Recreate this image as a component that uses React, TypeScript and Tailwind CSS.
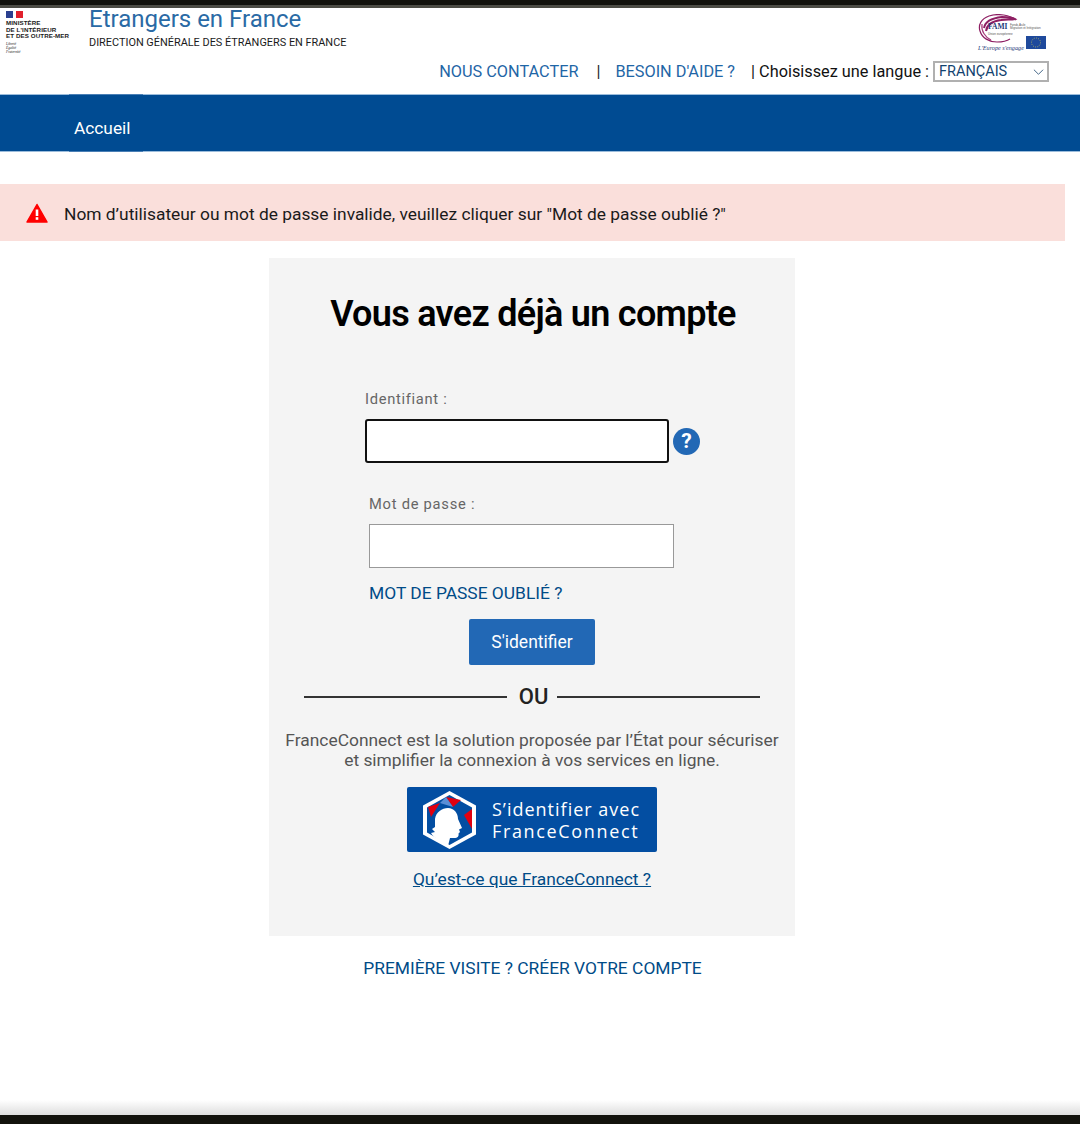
const MinistereLogo = () => (
  <div className="w-[70px] pl-[6px] pt-[3px] font-['Liberation_Sans',sans-serif] text-[#1a1a1a]">
    <div className="flex h-[7px] w-[17px]">
      <div className="w-[7px] bg-[#2a3f8f]" />
      <div className="w-[3px] bg-white" />
      <div className="w-[7px] bg-[#e1202c]" />
    </div>
    <div className="mt-[2px] text-[6.2px] leading-[6.6px] font-bold tracking-[0.1px] whitespace-nowrap">
      <div>MINISTÈRE</div>
      <div>DE L'INTÉRIEUR</div>
      <div>ET DES OUTRE-MER</div>
    </div>
    <div className="mt-[2px] font-['Liberation_Serif',serif] text-[3.5px] leading-[4px] italic">
      <div>Liberté</div>
      <div>Égalité</div>
      <div>Fraternité</div>
    </div>
  </div>
);

const FamiLogo = () => (
  <div className="relative h-[38px] w-[68px] font-['Liberation_Serif',serif]">
    <svg viewBox="0 0 68 38" className="absolute inset-0 h-[38px] w-[68px]" fill="none">
      <path d="M38 6C32 1 20-1 11 2 3 5 0 11 2 17c2 7 9 11 17 11 5 0 10-1 13-3" stroke="#8e1f63" strokeWidth="1.2" />
      <path d="M6 14C7 8 14 4 24 3c5 0 10 0 13 2-4 1-9 0-14 1C15 7 9 10 8 17" stroke="#8e1f63" strokeWidth="2" />
      <path d="M4 10c-1 7 3 13 9 16" stroke="#a83b7c" strokeWidth="1.2" />
      <rect x="48" y="22" width="20" height="13" fill="#1f4a9c" />
      <circle cx="58" cy="28.5" r="4.5" stroke="#e7d84d" strokeWidth="0.8" strokeDasharray="0.8 1.5" />
    </svg>
    <span className="absolute top-[8px] left-[10px] text-[7.5px] leading-[10px] font-bold text-[#243a78]">FAMI</span>
    <span className="absolute top-[10px] left-[32px] font-['Liberation_Sans',sans-serif] text-[3px] leading-[3.4px] whitespace-nowrap text-[#555]">
      Fonds Asile
      <br />
      Migration et Intégration
    </span>
    <span className="absolute top-[18px] left-[10px] font-['Liberation_Sans',sans-serif] text-[3px] leading-[4px] whitespace-nowrap text-[#555]">
      Union européenne
    </span>
    <span className="absolute top-[30px] left-0 text-[6.2px] leading-[8px] whitespace-nowrap text-[#243a78] italic">
      L'Europe s'engage
    </span>
  </div>
);

const FranceConnectButton = () => (
  <a className="flex h-[65px] w-[250px] items-center rounded-[2px] bg-[#034ea2] pl-[16px]">
    <svg viewBox="0 0 53 58" className="h-[58px] w-[53px]">
      <polygon points="26.5,0 53,14.5 53,43.5 26.5,58 0,43.5 0,14.5" fill="#fff" />
      <polygon points="26.5,4 49,16.5 49,41.5 26.5,54 4,41.5 4,16.5" fill="#034ea2" />
      <polygon points="5,16 17,12 8,26" fill="#e1000f" />
      <polygon points="23,6 38,9 30,16" fill="#e1000f" />
      <polygon points="49,18 49,38 41,24" fill="#e1000f" />
      <polygon points="17,12 23,6 30,16" fill="#5b8fd6" />
      <path
        d="M12 28C13 21 19 17 25 17 31 17 35 22 35 28L39 37 36 38.5 37 41 35.5 42.5C36 45 35 47 31 47H27L25 55 17 50C12 47 9 44 8 42L12 41 9 38 12 36Z"
        fill="#fff"
      />
    </svg>
    <div className="ml-[16px] font-['Open_Sans',sans-serif] text-[18px] leading-[22px] font-medium whitespace-nowrap text-white">
      <div className="tracking-[1px]">S’identifier avec</div>
      <div className="tracking-[1.65px]">FranceConnect</div>
    </div>
  </a>
);

export default function App() {
  return (
    <div className="relative flex h-[1124px] flex-col overflow-hidden bg-white font-['Roboto',sans-serif] text-black">
      {/* Top strip */}
      <div className="h-[5px] bg-[#12120c]" />
      <div className="h-[3px] bg-[#4c4c44]" />

      {/* Header */}
      <header className="h-[86px]">
        <div className="flex h-[51px] items-start justify-between">
          <div className="flex">
            <MinistereLogo />
            <div className="ml-[19px]">
              <div className="-mt-[2px] text-[24px] leading-[26px] text-[#2a6aa5]">Etrangers en France</div>
              <div className="mt-[4px] text-[10.9px] leading-[14px] text-[#1a1a1a]">
                DIRECTION GÉNÉRALE DES ÉTRANGERS EN FRANCE
              </div>
            </div>
          </div>
          <div className="mt-[6px] mr-[34px]">
            <FamiLogo />
          </div>
        </div>
        <div className="flex h-[24px] items-center justify-end pr-[31px] text-[16.3px]">
          <div className="flex pt-[2px]">
            <a className="text-[#1f66a6]">NOUS CONTACTER</a>
            <span className="ml-[18px] text-[#222]">|</span>
            <a className="ml-[15px] text-[#1f66a6]">BESOIN D'AIDE ?</a>
            <span className="ml-[16px] text-[#111]">| Choisissez une langue :</span>
          </div>
          <div className="ml-[4px] flex h-[21px] w-[116px] items-center justify-between border-2 border-[#b0b0b0] pt-[1px] pr-[3px] pl-[4px] text-[14.5px] text-[#12426f]">
            <span>FRANÇAIS</span>
            <svg viewBox="0 0 12 8" className="h-[8px] w-[11px]" fill="none" stroke="#33597d" strokeWidth="1">
              <path d="M1 1.5l5 5 5-5" />
            </svg>
          </div>
        </div>
      </header>

      {/* Nav */}
      <nav className="h-[58px] border-y border-[#9bbcdb] bg-[#004b92]">
        <a className="-my-px ml-[69px] flex h-[58px] w-[74px] items-center border-y border-[#4a7fb5] pt-[11px] pl-[5px] text-[17.3px] text-white">
          Accueil
        </a>
      </nav>

      {/* Error */}
      <div className="mt-[32px] flex h-[57px] w-[1065px] items-center bg-[#fadfdb] pl-[26px]">
        <svg viewBox="0 0 22 20" className="h-[20px] w-[22px]">
          <path d="M11 1.5L21 19H1z" fill="#f00" stroke="#f00" strokeWidth="1.5" strokeLinejoin="round" />
          <rect x="9.7" y="6.5" width="2.6" height="6.5" fill="#fff" />
          <rect x="9.7" y="14.2" width="2.6" height="2.6" fill="#fff" />
        </svg>
        <span className="ml-[16px] pt-[4px] text-[17.36px] text-[#1a1a1a]">
          Nom d’utilisateur ou mot de passe invalide, veuillez cliquer sur "Mot de passe oublié ?"
        </span>
      </div>

      {/* Login card */}
      <main className="mt-[17px] ml-[269px] flex h-[678px] w-[526px] flex-col bg-[#f4f4f4]">
        <h1 className="mt-[33px] pl-[2px] text-center text-[36px] leading-[46px] font-semibold tracking-[-0.7px]">
          Vous avez déjà un compte
        </h1>

        <label className="mt-[52px] ml-[96px] text-[14.7px] leading-[20px] tracking-[0.7px] text-[#666]">
          Identifiant :
        </label>
        <div className="mt-[10px] ml-[96px] flex items-center">
          <div className="h-[44px] w-[304px] rounded-[3px] border-2 border-[#111] bg-white" />
          <div className="ml-[4px] flex h-[27px] w-[27px] items-center justify-center rounded-full bg-[#2268b5] text-[21px] leading-none font-bold text-white">
            ?
          </div>
        </div>

        <label className="mt-[31px] ml-[100px] text-[14.7px] leading-[20px] tracking-[0.75px] text-[#666]">
          Mot de passe :
        </label>
        <div className="mt-[10px] ml-[100px] h-[44px] w-[305px] border border-[#999] bg-white" />

        <a className="mt-[15px] ml-[100px] text-[17.4px] leading-[20px] text-[#004b87]">MOT DE PASSE OUBLIÉ ?</a>

        <button className="mt-[16px] h-[46px] w-[126px] self-center rounded-[2px] bg-[#2268b5] text-[17.5px] text-white">
          S'identifier
        </button>

        <div className="mt-[20px] flex items-center justify-center">
          <div className="h-[2px] w-[203px] bg-[#333]" />
          <span className="mr-[9px] ml-[12px] text-[22px] leading-[24px] font-medium text-[#222]">OU</span>
          <div className="h-[2px] w-[203px] bg-[#333]" />
        </div>

        <p className="mt-[21px] text-center text-[17.4px] leading-[20px] text-[#555]">
          FranceConnect est la solution proposée par l’État pour sécuriser
          <br />
          et simplifier la connexion à vos services en ligne.
        </p>

        <div className="mt-[17px] self-center">
          <FranceConnectButton />
        </div>

        <a className="mt-[17px] self-center text-[17.4px] leading-[20px] text-[#004b87] underline">
          Qu’est-ce que FranceConnect ?
        </a>
      </main>

      <a className="mt-[22px] mr-[15px] self-center text-[17.4px] leading-[20px] text-[#004b87]">
        PREMIÈRE VISITE ? CRÉER VOTRE COMPTE
      </a>

      {/* Bottom strip */}
      <div className="mt-auto h-[15px] bg-gradient-to-b from-white to-[#dedede]" />
      <div className="h-[9px] bg-[#12120c]" />
    </div>
  );
}
